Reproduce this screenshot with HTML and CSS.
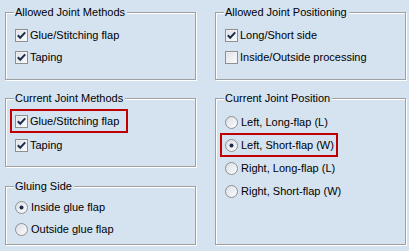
FILE: index.html
```html
<!DOCTYPE html>
<html>
<head>
<meta charset="utf-8">
<link rel="stylesheet" href="styles.css">
</head>
<body>
<svg class="defs" width="0" height="0" aria-hidden="true">
  <defs>
    <linearGradient id="boxfill" x1="0" y1="0" x2="1" y2="1">
      <stop offset="0" stop-color="#dde2e8"/>
      <stop offset="1" stop-color="#fbfbfc"/>
    </linearGradient>
    <linearGradient id="radfill" x1="0" y1="0" x2="1" y2="1">
      <stop offset="0" stop-color="#d9dee5"/>
      <stop offset="1" stop-color="#fdfdfd"/>
    </linearGradient>
  </defs>
</svg>
<div class="dialog">
  <div class="col">
    <section class="group h-allowed">
      <div class="group-title">Allowed Joint Methods</div>
      <div class="rows">
        <div class="opt"><svg class="ctl" viewBox="0 0 13 13"><rect x="0.5" y="0.5" width="12" height="12" fill="#f4f4f4" stroke="#8e8f8f"/><rect x="1.5" y="1.5" width="10" height="10" fill="url(#boxfill)"/><path d="M2.8 6.3 L5.2 8.8 L10.2 3.4" fill="none" stroke="#1c2d4c" stroke-width="2"/></svg><span>Glue/Stitching flap</span></div>
        <div class="opt"><svg class="ctl" viewBox="0 0 13 13"><rect x="0.5" y="0.5" width="12" height="12" fill="#f4f4f4" stroke="#8e8f8f"/><rect x="1.5" y="1.5" width="10" height="10" fill="url(#boxfill)"/><path d="M2.8 6.3 L5.2 8.8 L10.2 3.4" fill="none" stroke="#1c2d4c" stroke-width="2"/></svg><span>Taping</span></div>
      </div>
    </section>
    <section class="group h-current">
      <div class="group-title">Current Joint Methods</div>
      <div class="rows rows-current">
        <div class="opt marked"><svg class="ctl" viewBox="0 0 13 13"><rect x="0.5" y="0.5" width="12" height="12" fill="#f4f4f4" stroke="#8e8f8f"/><rect x="1.5" y="1.5" width="10" height="10" fill="url(#boxfill)"/><path d="M2.8 6.3 L5.2 8.8 L10.2 3.4" fill="none" stroke="#1c2d4c" stroke-width="2"/></svg><span>Glue/Stitching flap</span></div>
        <div class="opt"><svg class="ctl" viewBox="0 0 13 13"><rect x="0.5" y="0.5" width="12" height="12" fill="#f4f4f4" stroke="#8e8f8f"/><rect x="1.5" y="1.5" width="10" height="10" fill="url(#boxfill)"/><path d="M2.8 6.3 L5.2 8.8 L10.2 3.4" fill="none" stroke="#1c2d4c" stroke-width="2"/></svg><span>Taping</span></div>
      </div>
    </section>
    <section class="group h-gluing">
      <div class="group-title">Gluing Side</div>
      <div class="rows rows-gluing">
        <div class="opt radio"><svg class="ctl" viewBox="0 0 13 13"><circle cx="6.5" cy="6.5" r="6" fill="url(#radfill)" stroke="#8e8f8f"/><circle cx="6.5" cy="6.5" r="2" fill="#1c2d4c"/></svg><span>Inside glue flap</span></div>
        <div class="opt radio"><svg class="ctl" viewBox="0 0 13 13"><circle cx="6.5" cy="6.5" r="6" fill="url(#radfill)" stroke="#8e8f8f"/></svg><span>Outside glue flap</span></div>
      </div>
    </section>
  </div>
  <div class="col">
    <section class="group h-allowed">
      <div class="group-title">Allowed Joint Positioning</div>
      <div class="rows">
        <div class="opt"><svg class="ctl" viewBox="0 0 13 13"><rect x="0.5" y="0.5" width="12" height="12" fill="#f4f4f4" stroke="#8e8f8f"/><rect x="1.5" y="1.5" width="10" height="10" fill="url(#boxfill)"/><path d="M2.8 6.3 L5.2 8.8 L10.2 3.4" fill="none" stroke="#1c2d4c" stroke-width="2"/></svg><span>Long/Short side</span></div>
        <div class="opt"><svg class="ctl" viewBox="0 0 13 13"><rect x="0.5" y="0.5" width="12" height="12" fill="#f4f4f4" stroke="#8e8f8f"/><rect x="1.5" y="1.5" width="10" height="10" fill="url(#boxfill)"/></svg><span>Inside/Outside processing</span></div>
      </div>
    </section>
    <section class="group h-position">
      <div class="group-title">Current Joint Position</div>
      <div class="rows rows-position">
        <div class="opt radio"><svg class="ctl" viewBox="0 0 13 13"><circle cx="6.5" cy="6.5" r="6" fill="url(#radfill)" stroke="#8e8f8f"/></svg><span>Left, Long-flap (L)</span></div>
        <div class="opt radio marked"><svg class="ctl" viewBox="0 0 13 13"><circle cx="6.5" cy="6.5" r="6" fill="url(#radfill)" stroke="#8e8f8f"/><circle cx="6.5" cy="6.5" r="2" fill="#1c2d4c"/></svg><span>Left, Short-flap (W)</span></div>
        <div class="opt radio"><svg class="ctl" viewBox="0 0 13 13"><circle cx="6.5" cy="6.5" r="6" fill="url(#radfill)" stroke="#8e8f8f"/></svg><span>Right, Long-flap (L)</span></div>
        <div class="opt radio"><svg class="ctl" viewBox="0 0 13 13"><circle cx="6.5" cy="6.5" r="6" fill="url(#radfill)" stroke="#8e8f8f"/></svg><span>Right, Short-flap (W)</span></div>
      </div>
    </section>
  </div>
</div>
</body>
</html>
```

FILE: styles.css
```css
html, body {
  margin: 0;
  background: #d5e3f1;
}
body {
  font-family: "Liberation Sans", Arial, sans-serif;
  font-size: 11px;
  line-height: 13px;
  color: #000;
  width: 409px;
  height: 251px;
  overflow: hidden;
}
.defs {
  position: absolute;
  width: 0;
  height: 0;
}
.dialog {
  display: flex;
  gap: 19px;
  padding: 12px 0 0 5px;
}
.col {
  display: flex;
  flex-direction: column;
  gap: 18px;
  width: 191px;
  height: 233px;
}
.group {
  position: relative;
  box-sizing: border-box;
  border: 1px solid #a0a0a0;
  box-shadow: inset 1px 1px 0 #fff, 1px 1px 0 #fff;
}
.h-allowed { height: 68px; flex: none; }
.h-current { height: 69px; flex: none; }
.h-gluing { height: 59px; flex: none; margin-top: 1px; }
.h-position { flex: 1; }
.group-title {
  position: absolute;
  top: -7px;
  left: 8px;
  padding: 0 2px 0 1px;
  background: #d5e3f1;
  line-height: 13px;
  white-space: nowrap;
}
.rows {
  display: flex;
  flex-direction: column;
  align-items: flex-start;
  padding: 11px 0 0 9px;
}
.rows-current { gap: 2px; }
.rows-position { padding-top: 12px; gap: 1px; }
.rows-gluing { padding-top: 9px; }
.opt {
  position: relative;
  display: flex;
  align-items: center;
  gap: 2px;
  height: 22px;
  white-space: nowrap;
}
.opt.radio { gap: 3px; }
.ctl {
  width: 13px;
  height: 13px;
  flex: none;
}
.opt.marked::after {
  content: "";
  position: absolute;
  left: -5px;
  top: -1px;
  width: 118px;
  height: 24px;
  box-sizing: border-box;
  border: 2px solid #c00000;
}
```
